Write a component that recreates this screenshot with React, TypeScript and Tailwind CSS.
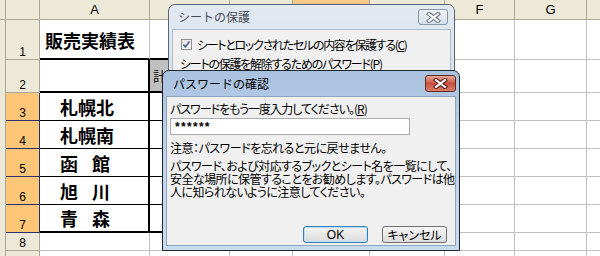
import React from 'react';

const JP = "font-['Noto_Sans_CJK_JP','Noto_Sans',sans-serif] [font-feature-settings:'palt']";
const JPT = "font-['Noto_Sans_CJK_JP','Noto_Sans',sans-serif]";
const ARIAL = "font-['Liberation_Sans','Arial',sans-serif]";

type ColDef = { key: string; label: string; w: string };
const cols: ColDef[] = [
  { key: 'A', label: 'A', w: 'w-[110px]' },
  { key: 'B', label: '', w: 'w-[80px]' },
  { key: 'C', label: '', w: 'w-[63px]' },
  { key: 'D', label: '', w: 'w-[77px]' },
  { key: 'E', label: '', w: 'w-[75px]' },
  { key: 'F', label: 'F', w: 'w-[70px]' },
  { key: 'G', label: 'G', w: 'w-[72px]' },
  { key: 'H', label: '', w: 'w-[80px]' },
];

type RowDef = { n: string; h: string; sel: boolean; name?: string };
const rows: RowDef[] = [
  { n: '1', h: 'h-[40px]', sel: false },
  { n: '2', h: 'h-[33px]', sel: false },
  { n: '3', h: 'h-[28px]', sel: true, name: '札幌北' },
  { n: '4', h: 'h-[28px]', sel: true, name: '札幌南' },
  { n: '5', h: 'h-[28px]', sel: true, name: '函　館' },
  { n: '6', h: 'h-[28px]', sel: true, name: '旭　川' },
  { n: '7', h: 'h-[28px]', sel: true, name: '青　森' },
  { n: '8', h: 'h-[18px]', sel: false },
  { n: '', h: 'h-[20px]', sel: false },
];

function cellBorder(r: number, c: number): string {
  const table = c <= 4;
  let b = 'border-b border-b-[#c0c0c0]';
  let rr = 'border-r border-r-[#c0c0c0]';
  if (table) {
    if (r === 0 || r === 1 || r === 6) b = 'border-b-2 border-b-black';
    else if (r >= 2 && r <= 5) b = 'border-b border-b-black';
    if (c === 0 && r >= 1 && r <= 6) rr = 'border-r-2 border-r-black';
  }
  return `${b} ${rr}`;
}

function CloseX({ active }: { active: boolean }) {
  const outline = active ? '#5b1810' : '#6b7787';
  return (
    <svg width="15" height="11" viewBox="0 0 15 11">
      <path d="M3 2 L12 9 M12 2 L3 9" stroke={outline} strokeWidth="4.2" strokeLinecap="square" fill="none" />
      <path d="M3 2 L12 9 M12 2 L3 9" stroke="#ffffff" strokeWidth="2.2" strokeLinecap="square" fill="none" />
    </svg>
  );
}

function Sheet() {
  return (
    <div className="flex flex-col">
      <div className="flex h-[20px]">
        <div className="w-[6px] shrink-0 bg-[#ece9d8] border-r border-b border-[#aca899]" />
        <div className="w-[34px] shrink-0 bg-[#ece9d8] border-r border-b border-[#aca899]" />
        {cols.map((c) => (
          <div
            key={c.key}
            className={`${c.w} shrink-0 flex items-center justify-center border-r border-b border-[#aca899] ${ARIAL} text-[13px] text-black ${
              c.key === 'D' ? 'bg-[#f8c888]' : 'bg-[#ece9d8]'
            }`}
          >
            {c.label}
          </div>
        ))}
      </div>
      {rows.map((row, ri) => (
        <div key={ri} className={`flex ${row.h}`}>
          <div className="w-[6px] shrink-0 bg-[#ece9d8] border-r border-[#aca899]" />
          <div
            className={`w-[34px] shrink-0 flex items-end justify-center border-r border-b leading-[14px] ${ARIAL} text-[12px] text-black ${
              row.sel ? 'bg-[#ffc677] border-[#26306e]' : 'bg-[#ece9d8] border-[#aca899]'
            }`}
          >
            {row.n}
          </div>
          {cols.map((c, ci) => {
            const bg = ri === 1 && ci === 1 ? 'bg-[#c0c0c0]' : 'bg-white';
            return (
              <div
                key={c.key}
                className={`${c.w} shrink-0 flex ${bg} ${cellBorder(ri, ci)} overflow-hidden`}
              >
                {ri === 0 && ci === 0 && (
                  <span className={`self-end pb-[6px] pl-[5px] leading-[24px] text-[18px] font-bold text-black ${JPT} whitespace-nowrap`}>
                    販売実績表
                  </span>
                )}
                {ri === 1 && ci === 1 && (
                  <span className={`self-center pl-[3px] text-[13px] text-black ${JPT}`}>計</span>
                )}
                {row.name && ci === 0 && (
                  <span
                    className={`self-center pl-[20px] text-[18px] leading-[24px] font-bold text-black ${JPT} whitespace-pre ${
                      row.name.includes('　') ? 'tracking-[-2px]' : ''
                    }`}
                  >
                    {row.name}
                  </span>
                )}
              </div>
            );
          })}
        </div>
      ))}
    </div>
  );
}

function ProtectDialog() {
  return (
    <div className="absolute left-[168px] top-[4px] w-[287px] h-[100px] rounded-t-[7px] border border-[#5c6673] bg-gradient-to-b from-[#e2e9f1] to-[#d5dfe9] flex flex-col px-[3px]">
      <div className="h-[24px] flex items-center justify-between pl-[6px] pr-[3px] shrink-0">
        <span className={`text-[12px] text-[#4a4f58] ${JPT}`}>シートの保護</span>
        <div className="w-[30px] h-[16px] rounded-[3px] border border-[#8896a8] bg-gradient-to-b from-[#eef2f7] to-[#d6dee8] flex items-center justify-center">
          <CloseX active={false} />
        </div>
      </div>
      <div className={`flex-1 bg-[#f0f0f0] border border-[#aebbca] pl-[7px] pt-[9px] ${JP} text-[12px] text-black`}>
        <div className="flex items-center gap-[5px] h-[11px] ml-[1px]">
          <div className="w-[11px] h-[11px] shrink-0 border border-[#8e8f8f] bg-gradient-to-br from-[#e6e6e6] to-[#ffffff] flex items-center justify-center">
            <svg width="9" height="9" viewBox="0 0 9 9">
              <path d="M1.5 4.5 L3.5 7 L7.5 1.5" stroke="#4a5f86" strokeWidth="1.6" fill="none" />
            </svg>
          </div>
          <span className="leading-[13px] whitespace-nowrap tracking-[-1.3px]">
            シートとロックされたセルの内容を保護する(<span className="underline">C</span>)
          </span>
        </div>
        <div className="mt-[8px] leading-[12px] whitespace-nowrap tracking-[-1.25px]">
          シートの保護を解除するためのパスワード(P)
        </div>
      </div>
    </div>
  );
}

function PasswordDialog() {
  return (
    <div className="absolute left-[162px] top-[70px] w-[298px] h-[181px] rounded-t-[7px] border border-[#1f252c] bg-gradient-to-b from-[#a9c2df] via-[#c2d5ec] to-[#c9dbee] flex flex-col px-[3px] pb-[4px]">
      <div className="h-[25px] flex items-center justify-between pl-[7px] shrink-0">
        <span className={`text-[12px] text-black ${JPT}`}>パスワードの確認</span>
        <div className="w-[31px] h-[17px] rounded-[3px] border border-[#5e2a24] bg-gradient-to-b from-[#e8a898] via-[#c9503f] to-[#d9806c] flex items-center justify-center">
          <CloseX active />
        </div>
      </div>
      <div className={`flex-1 bg-[#f0f0f0] border border-[#8fa4bd] flex flex-col px-[3px] pt-[5px] ${JP} text-[12px] text-black`}>
        <div className="leading-[13px] whitespace-nowrap tracking-[-1px]">
          パスワードをもう一度入力してください。(<span className="underline">R</span>)
        </div>
        <div className="mt-[3px] w-[240px] h-[17px] border border-[#abadb3] bg-white flex items-center pl-[4px]">
          <span className={`${ARIAL} text-[12px] font-bold tracking-[1.3px] leading-none`}>******</span>
        </div>
        <div className="mt-[7px] leading-[12px] whitespace-nowrap tracking-[-0.5px]">
          注意：パスワードを忘れると元に戻せません。
        </div>
        <div className="mt-[5px] flex flex-col tracking-[-0.55px] whitespace-nowrap">
          <span className="leading-[13px]">パスワード、および対応するブックとシート名を一覧にして、</span>
          <span className="leading-[13px]">安全な場所に保管することをお勧めします。パスワードは他</span>
          <span className="leading-[13px]">人に知られないように注意してください。</span>
        </div>
        <div className="mt-[28px] flex justify-end gap-[14px] pr-[5px]">
          <button className={`w-[65px] h-[17px] rounded-[3px] border border-[#3c7fb1] bg-gradient-to-b from-[#f4f4f4] to-[#dcdcdc] shadow-[inset_0_0_0_1px_#b6e0f8] flex items-center justify-center ${ARIAL} text-[12px] text-black leading-none`}>
            OK
          </button>
          <button className={`w-[65px] h-[17px] rounded-[3px] border border-[#707070] bg-gradient-to-b from-[#f6f6f6] to-[#dddddd] flex items-center justify-center ${JPT} text-[12px] text-black leading-none`}>
            キャンセル
          </button>
        </div>
      </div>
    </div>
  );
}

export default function App() {
  return (
    <div className="relative w-[600px] h-[256px] overflow-hidden bg-white">
      <Sheet />
      <ProtectDialog />
      <PasswordDialog />
    </div>
  );
}
